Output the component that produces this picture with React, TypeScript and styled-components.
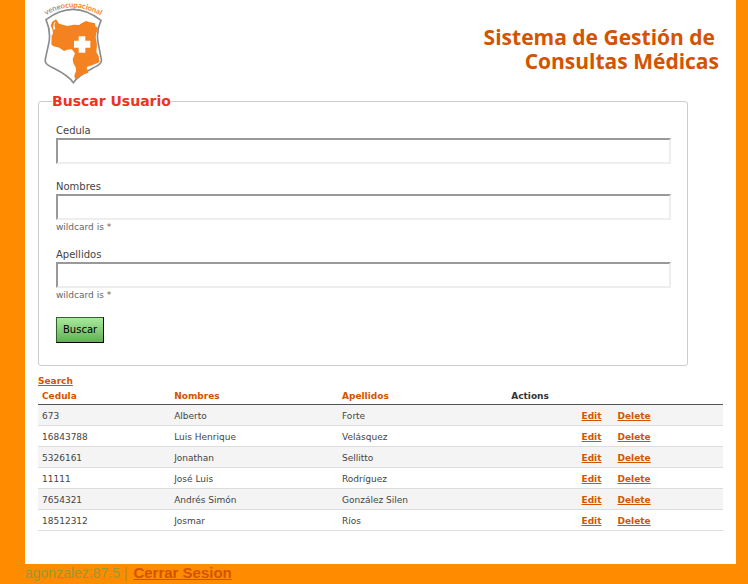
import React from "react";
import styled, { createGlobalStyle } from "styled-components";

const GlobalStyle = createGlobalStyle`
  * { box-sizing: border-box; }
  body {
    margin: 0;
    background: #ff8c00;
    color: #444;
    font: 9px/12px "DejaVu Sans", Verdana, sans-serif;
  }
`;

const Sheet = styled.div`
  margin: 0 12px 0 25px;
  padding: 0 13px 33px;
  background: #fff;
`;

const Header = styled.header`
  display: flex;
  justify-content: space-between;
  align-items: flex-start;
  height: 92px;
`;

const Logo = styled.svg`
  width: 70px;
  height: 86px;
  display: block;
`;

const Title = styled.h1`
  display: flex;
  flex-direction: column;
  align-items: flex-end;
  margin: 0;
  padding: 25px 4px 0 0;
  color: #d35400;
  font: 700 21px/24px "Open Sans", "Noto Sans", sans-serif;
`;

const TitleLine = styled.span<{ $inset?: boolean }>`
  padding-right: ${(p) => (p.$inset ? 4 : 0)}px;
`;

const Fieldset = styled.fieldset`
  margin: 0 35px 0 0;
  padding: 15px 13px 22px;
  border: 1px solid #ccc;
  border-radius: 3px;
`;

const Legend = styled.legend`
  padding: 0;
  color: #ee3322;
  font-size: 14px;
  line-height: 18px;
  font-weight: bold;
`;

const Form = styled.form`
  display: flex;
  flex-direction: column;
  align-items: flex-start;
  gap: 17px;
  padding: 0 3px 0 4px;
`;

const Field = styled.div`
  width: 100%;
`;

const Label = styled.label`
  display: block;
  font-size: 10px;
  line-height: 12px;
  margin-bottom: 1px;
`;

const TextBox = styled.input`
  display: block;
  width: 100%;
  height: 26px;
  padding: 2px 4px;
  border: 2px solid;
  border-color: #999 #eee #eee #999;
  background: #fff;
  font: inherit;
`;

const Hint = styled.div`
  height: 12px;
  color: #666;
  line-height: 14px;
`;

const Submit = styled.button`
  height: 26px;
  padding: 0 6px;
  border: 1px solid;
  border-color: #2d6324 #000 #000 #2d6324;
  background: linear-gradient(#a8ea9c, #62af56);
  color: #000;
  font: 10px/12px "DejaVu Sans", sans-serif;
`;

const Link = styled.a`
  color: #d35400;
  font-weight: bold;
`;

const SearchBar = styled.div`
  padding-top: 9px;
`;

const Table = styled.table`
  width: 100%;
  border-collapse: collapse;
  table-layout: fixed;
`;

const Column = styled.col<{ $share: number }>`
  width: ${(p) => p.$share}%;
`;

const HeadCell = styled.th<{ $plain?: boolean }>`
  padding: 3px 4px 2px;
  border-bottom: 1px solid #555;
  color: ${(p) => (p.$plain ? "#333" : "#d35400")};
  text-align: left;
`;

const Row = styled.tr`
  &:nth-child(odd) { background: #f4f4f4; }
`;

const Cell = styled.td`
  padding: 5px 4px 3px;
  border-bottom: 1px solid #ddd;
`;

const Actions = styled.div`
  display: flex;
  justify-content: center;
  gap: 16px;
  padding-left: 2px;
`;

const Footer = styled.footer`
  margin-left: 25px;
  color: #999933;
  font: 14px/18px "Liberation Sans", Arial, sans-serif;
`;

const LogoutLink = styled(Link)`
  margin-left: 2px;
  font-size: 15px;
`;

const fields = [
  { id: "cedula", label: "Cedula" },
  { id: "nombres", label: "Nombres", hint: "wildcard is *" },
  { id: "apellidos", label: "Apellidos", hint: "wildcard is *" },
];

const users = [
  ["673", "Alberto", "Forte"],
  ["16843788", "Luis Henrique", "Velásquez"],
  ["5326161", "Jonathan", "Sellitto"],
  ["11111", "José Luis", "Rodríguez"],
  ["7654321", "Andrés Simón", "González Silen"],
  ["18512312", "Josmar", "Ríos"],
];

function BrandLogo() {
  return (
    <Logo viewBox="42 0 210 258" role="img" aria-label="veneocupacional">
      <path id="brand-arc" d="M66 46 Q148 -4 238 52" fill="none" />
      <text fontFamily="Lato, sans-serif" fontSize="23" fontWeight="700" fill="#f58220">
        <textPath href="#brand-arc">
          <tspan fill="#999">vene</tspan>ocupacional
        </textPath>
      </text>
      <path
        d="M66 59 Q148 -4 231 61 Q214 98 224 136 Q228 158 232 178 Q234 188 225 194 C205 208 170 217 148 248 C126 217 90 208 70 194 Q62 188 64 178 Q68 158 73 136 Q83 98 66 59Z"
        fill="#fff"
        stroke="#8c8c8c"
        strokeWidth="5"
      />
      <path
        d="M96 58 L84 66 L80 77 L85 88 L87 100 L83 108 L82 133 L88 139 L106 143 L120 153 L130 149 L143 148 L153 160 L146 178 L148 190 L155 202 L156 214 L151 226 L153 237 L172 226 L193 218 L188 201 L204 196 L226 187 L224 168 L217 156 L219 134 L215 112 L217 100 L222 84 L214 78 L213 70 L198 67 L186 63 L174 69 L165 75 L150 74 L130 78 L116 74 L105 71Z"
        fill="#f58220"
      />
      <path d="M95 65 L91 75 L94 86 L89 90 L87 80 L90 69Z" fill="#fff" />
      <path d="M164 109h20v13h15v21h-15v15h-20v-15h-14v-21h14z" fill="#fff" />
    </Logo>
  );
}

export default function App() {
  return (
    <>
      <GlobalStyle />
      <Sheet>
        <Header>
          <BrandLogo />
          <Title>
            <TitleLine $inset>Sistema de Gestión de</TitleLine>
            <TitleLine>Consultas Médicas</TitleLine>
          </Title>
        </Header>
        <Fieldset>
          <Legend>Buscar Usuario</Legend>
          <Form onSubmit={(e) => e.preventDefault()}>
            {fields.map((f) => (
              <Field key={f.id}>
                <Label htmlFor={f.id}>{f.label}</Label>
                <TextBox id={f.id} name={f.id} type="text" />
                {f.hint && <Hint>{f.hint}</Hint>}
              </Field>
            ))}
            <Submit type="submit">Buscar</Submit>
          </Form>
        </Fieldset>
        <SearchBar>
          <Link href="#search">Search</Link>
        </SearchBar>
        <Table>
          <colgroup>
            <Column $share={19.3} />
            <Column $share={24.5} />
            <Column $share={24.7} />
            <Column $share={31.5} />
          </colgroup>
          <thead>
            <tr>
              <HeadCell>Cedula</HeadCell>
              <HeadCell>Nombres</HeadCell>
              <HeadCell>Apellidos</HeadCell>
              <HeadCell $plain>Actions</HeadCell>
            </tr>
          </thead>
          <tbody>
            {users.map(([id, first, last]) => (
              <Row key={id}>
                <Cell>{id}</Cell>
                <Cell>{first}</Cell>
                <Cell>{last}</Cell>
                <Cell>
                  <Actions>
                    <Link href="#edit">Edit</Link>
                    <Link href="#delete">Delete</Link>
                  </Actions>
                </Cell>
              </Row>
            ))}
          </tbody>
        </Table>
      </Sheet>
      <Footer>
        agonzalez.87.5 | <LogoutLink href="#logout">Cerrar Sesion</LogoutLink>
      </Footer>
    </>
  );
}
